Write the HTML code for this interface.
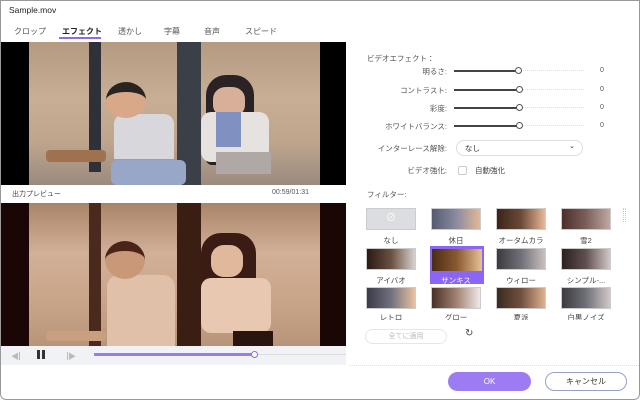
<!DOCTYPE html>
<html><head><meta charset="utf-8"><style>
*{box-sizing:border-box;margin:0;padding:0}
body{width:640px;height:400px;background:#fff;font-family:"Liberation Sans","Noto Sans CJK JP",sans-serif;font-size:8px;color:#333;position:relative;overflow:hidden}
.a{position:absolute}
.frame{left:0;top:0;width:640px;height:400px;border:1px solid #999;border-radius:0 0 6px 6px}
.tab{top:26px;font-size:8px;color:#555}
.lbl{right:193px;font-size:7.5px;color:#555;text-align:right}
.sl{left:454px;width:130px;height:1px;border-top:1px dotted #ddd}
.slf{left:454px;height:2px;background:#444}
.kn{width:7px;height:7px;border:1px solid #555;border-radius:50%;background:#fff}
.val{left:600px;font-size:7px;color:#555}
.th{width:50px;height:22px;border:1px solid #ccc}
.tl{width:64px;text-align:center;font-size:7.5px;color:#444}
</style></head><body>
<div class="a frame"></div>
<div class="a" style="left:9px;top:5px;font-size:8.5px;color:#222">Sample.mov</div>
<div class="a tab" style="left:14px">クロップ</div>
<div class="a tab" style="left:62px;color:#222;font-weight:bold">エフェクト</div>
<div class="a" style="left:59px;top:37px;width:42px;height:2px;background:#8b6cf0"></div>
<div class="a tab" style="left:118px">透かし</div>
<div class="a tab" style="left:164px">字幕</div>
<div class="a tab" style="left:204px">音声</div>
<div class="a tab" style="left:245px">スピード</div>

<div class="a" style="left:1px;top:42px;width:345px;height:143px;background:#000;overflow:hidden">
 <div class="a" style="left:28px;top:0;width:291px;height:143px;background:linear-gradient(180deg,#b59a82 0%,#c8ae95 40%,#bfa58c 70%,#9a8a80 100%)"></div>
 <div class="a" style="left:88px;top:0;width:12px;height:130px;background:#2e3238"></div>
 <div class="a" style="left:176px;top:0;width:24px;height:143px;background:#3a3f48"></div>
 <div class="a" style="left:45px;top:108px;width:60px;height:12px;background:#a0714e;border-radius:4px"></div>
 <div class="a" style="left:113px;top:72px;width:60px;height:45px;background:#d8d8dc;border-radius:10px 10px 0 0"></div>
 <div class="a" style="left:110px;top:118px;width:75px;height:25px;background:#98a6c8;border-radius:6px"></div>
 <div class="a" style="left:105px;top:40px;width:40px;height:36px;background:#d8a888;border-radius:50%;border-top:10px solid #2a2420"></div>
 <div class="a" style="left:205px;top:33px;width:48px;height:90px;background:#2a2224;border-radius:20px 20px 6px 6px"></div>
 <div class="a" style="left:212px;top:45px;width:32px;height:30px;background:#d8b09a;border-radius:40%"></div>
 <div class="a" style="left:200px;top:70px;width:68px;height:50px;background:#e6e2e0;border-radius:10px"></div>
 <div class="a" style="left:215px;top:70px;width:25px;height:35px;background:#8090c0"></div>
 <div class="a" style="left:215px;top:110px;width:55px;height:22px;background:#b0a8a4"></div>
</div>
<div class="a" style="left:12px;top:189px;font-size:7px;color:#444">出力プレビュー</div>
<div class="a" style="left:272px;top:189px;font-size:7px;color:#555">00:59/01:31</div>

<div class="a" style="left:1px;top:203px;width:345px;height:143px;background:#1a0605;overflow:hidden">
 <div class="a" style="left:28px;top:0;width:291px;height:143px;background:linear-gradient(180deg,#a88468 0%,#d2b098 35%,#c8a488 70%,#b89478 100%)"></div>
 <div class="a" style="left:88px;top:0;width:12px;height:143px;background:#4a2a1c"></div>
 <div class="a" style="left:176px;top:0;width:24px;height:143px;background:#3a1e14"></div>
 <div class="a" style="left:45px;top:128px;width:60px;height:10px;background:#c8a080;border-radius:4px"></div>
 <div class="a" style="left:106px;top:72px;width:68px;height:71px;background:#e0c0a8;border-radius:12px 12px 0 0"></div>
 <div class="a" style="left:104px;top:38px;width:40px;height:38px;background:#c89878;border-radius:50%;border-top:10px solid #4a2418"></div>
 <div class="a" style="left:200px;top:30px;width:55px;height:80px;background:#3a1c14;border-radius:20px 20px 6px 6px"></div>
 <div class="a" style="left:210px;top:42px;width:32px;height:32px;background:#e0b89c;border-radius:40%"></div>
 <div class="a" style="left:200px;top:75px;width:70px;height:55px;background:#e8c8b0;border-radius:10px"></div>
 <div class="a" style="left:232px;top:128px;width:40px;height:15px;background:#2a1410"></div>
</div>
<div class="a" style="left:1px;top:346px;width:345px;height:19px;background:#f1f2f6"></div>
<div class="a" style="left:11px;top:351px;font-size:8px;color:#bbb">◀▏</div>
<div class="a" style="left:37px;top:350px;width:3px;height:9px;background:#333"></div>
<div class="a" style="left:42px;top:350px;width:3px;height:9px;background:#333"></div>
<div class="a" style="left:60px;top:351px;font-size:8px;color:#bbb">▕▶</div>
<div class="a" style="left:94px;top:354px;width:252px;height:1px;background:#ddd"></div>
<div class="a" style="left:94px;top:353px;width:160px;height:3px;background:#9a7cf0"></div>
<div class="a" style="left:251px;top:351px;width:7px;height:7px;border:1px solid #8b6cf0;border-radius:50%;background:#fff"></div>

<div class="a" style="left:367px;top:53px;font-size:7.5px;color:#555">ビデオエフェクト：</div>
<div class="a lbl" style="top:66px">明るさ:</div>
<div class="a lbl" style="top:85px">コントラスト:</div>
<div class="a lbl" style="top:103px">彩度:</div>
<div class="a lbl" style="top:121px">ホワイトバランス:</div>
<div class="a sl" style="top:70px"></div><div class="a slf" style="top:70px;width:64px"></div><div class="a kn" style="left:515px;top:67px"></div>
<div class="a sl" style="top:89px"></div><div class="a slf" style="top:89px;width:66px"></div><div class="a kn" style="left:516px;top:86px"></div>
<div class="a sl" style="top:107px"></div><div class="a slf" style="top:107px;width:66px"></div><div class="a kn" style="left:516px;top:104px"></div>
<div class="a sl" style="top:125px"></div><div class="a slf" style="top:125px;width:66px"></div><div class="a kn" style="left:516px;top:122px"></div>
<div class="a val" style="top:67px">0</div><div class="a val" style="top:86px">0</div><div class="a val" style="top:104px">0</div><div class="a val" style="top:122px">0</div>
<div class="a lbl" style="top:143px">インターレース解除:</div>
<div class="a" style="left:456px;top:140px;width:127px;height:16px;border:1px solid #ddd;border-radius:8px"></div>
<div class="a" style="left:465px;top:143px;font-size:7.5px;color:#333">なし</div>
<div class="a" style="left:569px;top:142px;font-size:7px;color:#333">⌄</div>
<div class="a lbl" style="top:165px">ビデオ強化:</div>
<div class="a" style="left:458px;top:166px;width:9px;height:9px;border:1px solid #ccc;border-radius:2px"></div>
<div class="a" style="left:475px;top:165px;font-size:7.5px;color:#444">自動強化</div>
<div class="a" style="left:367px;top:189px;font-size:7.5px;color:#555">フィルター:</div>

<div class="a" style="left:430px;top:246px;width:54px;height:38px;background:#8b65f5"></div>
<div class="a th" style="left:366px;top:208px;background:#dcdde0;text-align:center;color:#fff;font-size:10px;line-height:20px">⊘</div>
<div class="a th" style="left:431px;top:208px;background:linear-gradient(90deg,#555a70,#8a8aa0 50%,#e0b898)"></div>
<div class="a th" style="left:496px;top:208px;background:linear-gradient(90deg,#3a2418,#6a4a38 50%,#e8b898)"></div>
<div class="a th" style="left:561px;top:208px;background:linear-gradient(90deg,#4a3028,#7a6058 50%,#c0a8a0)"></div>
<div class="a th" style="left:366px;top:248px;background:linear-gradient(90deg,#2a1a14,#6a5040 50%,#d8d0d0)"></div>
<div class="a th" style="left:432px;top:249px;border:none;background:linear-gradient(90deg,#4a2c14,#8a5a30 50%,#e8c098)"></div>
<div class="a th" style="left:496px;top:248px;background:linear-gradient(90deg,#3a3a40,#707078 50%,#c8c0c0)"></div>
<div class="a th" style="left:561px;top:248px;background:linear-gradient(90deg,#2a2220,#605050 50%,#d0c8c8)"></div>
<div class="a th" style="left:366px;top:287px;background:linear-gradient(90deg,#3a3a48,#707080 50%,#e8c0a0)"></div>
<div class="a th" style="left:431px;top:287px;background:linear-gradient(90deg,#4a3028,#a08070 50%,#f0e8e8)"></div>
<div class="a th" style="left:496px;top:287px;background:linear-gradient(90deg,#3a2a20,#705040 50%,#e0b090)"></div>
<div class="a th" style="left:561px;top:287px;background:linear-gradient(90deg,#3a3a40,#707078 50%,#d0c8c8)"></div>
<div class="a tl" style="left:359px;top:235px">なし</div>
<div class="a tl" style="left:424px;top:235px">休日</div>
<div class="a tl" style="left:489px;top:235px">オータムカラ</div>
<div class="a tl" style="left:554px;top:235px">雪2</div>
<div class="a tl" style="left:359px;top:275px">アイバオ</div>
<div class="a tl" style="left:424px;top:275px;color:#fff">サンキス</div>
<div class="a tl" style="left:489px;top:275px">ウィロー</div>
<div class="a tl" style="left:554px;top:275px">シンプル-...</div>
<div class="a" style="left:360px;top:313px;width:260px;height:7px;overflow:hidden">
 <div class="a tl" style="left:-1px;top:-1px">レトロ</div>
 <div class="a tl" style="left:64px;top:-1px">グロー</div>
 <div class="a tl" style="left:129px;top:-1px">夏派</div>
 <div class="a tl" style="left:194px;top:-1px">白黒ノイズ</div>
</div>
<div class="a" style="left:623px;top:208px;width:3px;height:14px;border:1px dotted #ccc"></div>
<div class="a" style="left:365px;top:329px;width:82px;height:15px;border:1px solid #e6e6e6;border-radius:8px;text-align:center;font-size:7px;color:#bbb;line-height:13px">全てに適用</div>
<div class="a" style="left:465px;top:328px;font-size:10px;color:#444">↻</div>
<div class="a" style="left:350px;top:365px;width:289px;height:1px;border-top:1px dotted #ddd"></div>
<div class="a" style="left:448px;top:372px;width:83px;height:19px;background:#9d7bf2;border-radius:10px;color:#fff;text-align:center;font-size:8px;line-height:19px">OK</div>
<div class="a" style="left:545px;top:372px;width:82px;height:19px;border:1px solid #98a0c8;border-radius:10px;color:#333;text-align:center;font-size:8px;line-height:17px">キャンセル</div>
</body></html>
